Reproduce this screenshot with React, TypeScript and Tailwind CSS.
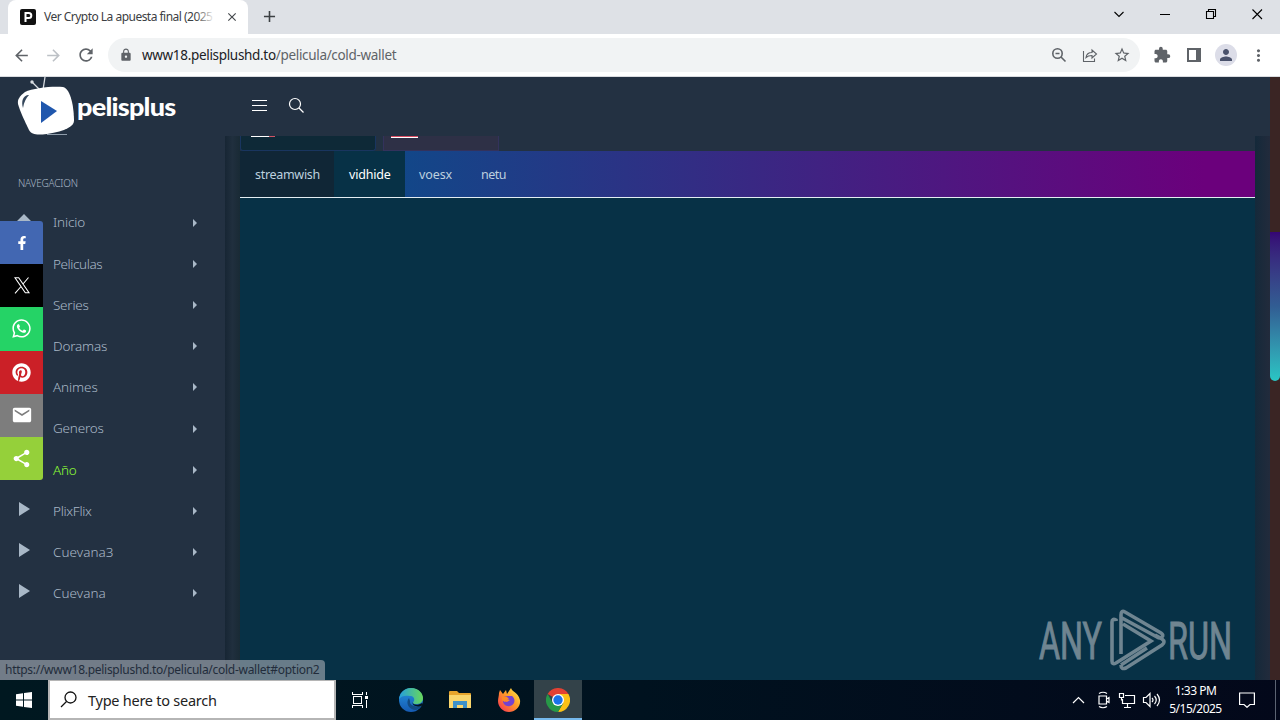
import { FaFacebookF, FaWhatsapp, FaPinterest } from 'react-icons/fa';
import { MdArrowBack, MdArrowForward, MdRefresh, MdLock, MdClose, MdAdd, MdExtension, MdPerson, MdEmail, MdShare, MdStarBorder, MdMoreVert } from 'react-icons/md';

const NAV_ITEMS = [
  { label: 'Inicio', tracking: 'tracking-[-0.15px]' },
  { label: 'Peliculas', tracking: 'tracking-[-0.4px]' },
  { label: 'Series', tracking: 'tracking-[-0.25px]' },
  { label: 'Doramas', tracking: 'tracking-[-0.2px]' },
  { label: 'Animes', tracking: 'tracking-[-0.1px]' },
  { label: 'Generos', tracking: 'tracking-[-0.2px]' },
  { label: 'Año', tracking: 'tracking-[-0.2px]', active: true },
  { label: 'PlixFlix', tracking: 'tracking-[-0.3px]', play: true },
  { label: 'Cuevana3', tracking: 'tracking-[0.05px]', play: true },
  { label: 'Cuevana', tracking: 'tracking-[0.05px]', play: true },
];

const SHARE_ITEMS = [
  { name: 'facebook', color: 'bg-[#4267b2]', icon: <FaFacebookF size={14} /> },
  { name: 'x', color: 'bg-black', icon: <XIcon /> },
  { name: 'whatsapp', color: 'bg-[#25d366]', icon: <FaWhatsapp size={21} /> },
  { name: 'pinterest', color: 'bg-[#cb2027]', icon: <FaPinterest size={19} /> },
  { name: 'email', color: 'bg-[#7d7d7d]', icon: <MdEmail size={22} /> },
  { name: 'share', color: 'bg-[#95d03a]', icon: <MdShare size={21} /> },
];

function XIcon() {
  return (
    <svg width="16" height="17" viewBox="0 0 16 17" fill="none" stroke="currentColor" strokeWidth="1.1">
      <path d="M1 .8h3.700l10.300 15h-3.700zM14.500.5L9 7M7 9.500L1 16.300" />
    </svg>
  );
}

function TabStrip() {
  return (
    <div className="flex h-[34px] shrink-0 items-end bg-[#dee1e6]">
      <div className="ml-2 flex h-[34px] w-[240px] items-center rounded-t-lg bg-white pl-3">
        <svg width="16" height="16" viewBox="0 0 16 16" className="shrink-0">
          <rect width="16" height="16" rx="2" fill="#111" />
          <path d="M5.500 13V4h3.300a2.500 2.500 0 0 1 0 5H5.500" fill="none" stroke="#fff" strokeWidth="2" />
        </svg>
        <span className="relative ml-2 w-[171px] text-[12px] leading-4 tracking-[-0.52px] whitespace-nowrap text-[#3c4043]">
          Ver Crypto La apuesta final (2025
          <span className="absolute inset-y-0 right-0 w-5 bg-gradient-to-r from-transparent to-white" />
        </span>
        <MdClose size={14} className="ml-[10px] text-[#45494d]" />
      </div>
      <MdAdd size={19} className="mb-2 ml-[12px] text-[#3c4043]" />
      <div className="mb-[11px] ml-auto flex items-center pr-[15px] text-black">
        <svg width="160" height="18" viewBox="0 0 160 18" fill="none" stroke="currentColor" strokeWidth="1.1">
          <path d="M9.500 7l4.500 4.500L18.500 7" />
          <path d="M55 9.500h10" shapeRendering="crispEdges" />
          <path d="M101.500 6.500h7v7h-7zM103.500 6.500v-2h7v7h-2" />
          <path d="M147.500 4.500l9.500 9.500M157 4.500l-9.500 9.500" />
        </svg>
      </div>
    </div>
  );
}

function Toolbar() {
  return (
    <div className="flex h-[43px] shrink-0 items-center border-b border-[#dadce0] bg-white text-[#5f6368]">
      <div className="flex w-[108px] items-center gap-[13px] pl-[12px]">
        <MdArrowBack size={19} />
        <MdArrowForward size={19} className="text-[#bdc1c6]" />
        <MdRefresh size={20} />
      </div>
      <div className="flex h-[34px] w-[1032px] items-center rounded-full bg-[#f1f3f4] pr-[9px] pl-[11px]">
        <MdLock size={14} />
        <span className="ml-[9px] text-[13.5px] tracking-[-0.32px] text-[#5f6368]">
          <span className="text-[#202124]">www18.pelisplushd.to</span>/pelicula/cold-wallet
        </span>
        <div className="ml-auto flex items-center gap-[15px]">
          <svg width="16" height="16" viewBox="0 0 16 16" fill="none" stroke="currentColor" strokeWidth="1.600">
            <circle cx="6.500" cy="6.500" r="4.700" />
            <path d="M10 10l4.500 4.500M4.500 6.500h4" />
          </svg>
          <svg width="16" height="16" viewBox="0 0 16 16" fill="none" stroke="currentColor" strokeWidth="1.100">
            <path d="M1.500 4v10.500h11v-3M4 10.500c.5-3.500 2.500-5 6-5V3l4.500 4-4.500 4V8.500c-2.500 0-4.500.5-6 2z" />
          </svg>
          <MdStarBorder size={18} />
        </div>
      </div>
      <MdExtension size={18} className="ml-[13px]" />
      <svg width="16" height="16" viewBox="0 0 16 16" className="ml-[15px]">
        <path d="M1 1h14v14H1zM3 3v10h7V3z" fill="currentColor" fillRule="evenodd" />
      </svg>
      <span className="ml-[13px] flex h-[22px] w-[22px] items-center justify-center rounded-full bg-[#dcdde8] text-[#49516b]">
        <MdPerson size={18} />
      </span>
      <MdMoreVert size={19} className="ml-[12px]" />
    </div>
  );
}

function Logo() {
  return (
    <div className="relative flex h-[59px] w-[225px] items-center">
      <svg width="80" height="60" viewBox="0 0 80 60" className="absolute top-0 left-0">
        <path d="M41 14L32 5M43 13l2-13" stroke="#d9dde2" strokeWidth="1.300" />
        <circle cx="32" cy="5" r="1.700" fill="#d9dde2" />
        <path d="M25 15c8-4 27-6 38-5 8 2 11 21 11 34 0 5-8 10-27 13-10 1-15 1-18-4-4-8-9-19-11-26-.8-5 2-8 7-12z" fill="#fff" />
        <path d="M28 18c-5 1-7 6-5 13 1-6 3-10 6-13z" fill="#33455a" />
        <path d="M41 24l16 10-16 12z" fill="#2057ad" />
        <path d="M47 57.500h20" stroke="#8f9dab" />
      </svg>
      <span className="relative -top-px ml-[77px] origin-left scale-x-[1.08] font-['Lato',sans-serif] text-[25px] leading-7 font-black tracking-[-0.7px] text-white">pelisplus</span>
    </div>
  );
}

function Header() {
  return (
    <header className="flex h-[59px] shrink-0 items-center bg-[#233142] text-white">
      <Logo />
      <svg width="15" height="12" viewBox="0 0 15 12" className="relative -top-[2px] ml-[27px]" shapeRendering="crispEdges">
        <path d="M0 1.500h15M0 6.500h15M0 11.500h15" stroke="currentColor" strokeWidth="1.200" />
      </svg>
      <svg width="17" height="17" viewBox="0 0 17 17" className="relative -top-px ml-[21px]" fill="none" stroke="currentColor" strokeWidth="1.200">
        <circle cx="7" cy="7" r="5.500" />
        <path d="M11 11l4.500 4.500" />
      </svg>
    </header>
  );
}

function Sidebar() {
  return (
    <aside className="w-[225px] shrink-0 bg-[#233142] text-[#a9b8c7]">
      <h2 className="mt-[40px] mb-[12px] ml-[18px] text-[10px] leading-[14px] font-light tracking-[-0.2px]">NAVEGACION</h2>
      <ul>
        {NAV_ITEMS.map((item) => (
          <li key={item.label} className="flex h-[41.200px] items-center pr-[27px] pl-[18px]">
            <span className="w-[35px]">
              {item.play && (
                <svg width="13" height="14" viewBox="0 0 13 14" className="relative -top-[2px]">
                  <path d="M1 0l11 7-11 7z" fill="currentColor" />
                </svg>
              )}
              {item.label === 'Inicio' && (
                <svg width="14" height="14" viewBox="0 0 14 14" className="relative -top-[2px] -left-px">
                  <path d="M7 0l7 7h-2v7H2V7H0z" fill="currentColor" />
                </svg>
              )}
            </span>
            <span className={`text-[13.5px] font-light ${item.tracking} ${item.active ? 'text-[#8dfc35]' : ''}`}>{item.label}</span>
            <svg width="6" height="8" viewBox="0 0 6 8" className="ml-auto">
              <path d="M1 0l4 4-4 4z" fill="currentColor" />
            </svg>
          </li>
        ))}
      </ul>
    </aside>
  );
}

function ShareBar() {
  return (
    <div className="absolute top-[144px] left-0 w-[43px] overflow-hidden rounded-r-[3px] text-white">
      {SHARE_ITEMS.map((item) => (
        <div key={item.name} className={`flex h-[43.200px] items-center justify-center ${item.color}`}>{item.icon}</div>
      ))}
    </div>
  );
}

function Player() {
  return (
    <main className="flex w-[1015px] shrink-0 flex-col bg-[#073146]">
      <div className="flex h-[15px] shrink-0 gap-[7px] bg-[#233142]">
        <div className="w-[136px] rounded-b-[3px] border border-t-0 border-[#19355f] bg-[#0e2937] pl-[10px]">
          <div className="flex h-px w-[24px] bg-white"><span className="ml-auto w-[6px] bg-[#d05465]" /></div>
        </div>
        <div className="w-[116px] border border-t-0 border-[#33325c] bg-[#2e3046] pl-[7px]">
          <div className="h-[2px] w-[27px] border-b border-white bg-[#d94b62]" />
        </div>
      </div>
      <nav className="flex h-[47px] shrink-0 border-b border-[#e3edf2] bg-[linear-gradient(to_right,#00558b,#6b007c_95%)] text-[12.5px] text-[#bdd0df]">
        <span className="flex w-[94px] items-center bg-[#102636] pt-[2px] pl-[15px] tracking-[-0.3px]">streamwish</span>
        <span className="flex w-[71px] items-center bg-[#073146] pt-[2px] pl-[15px] tracking-[-0.2px] text-white">vidhide</span>
        <span className="flex w-[62px] items-center pt-[2px] pl-[14px] tracking-[-0.1px]">voesx</span>
        <span className="flex items-center pt-[2px] pl-[14px] tracking-[-0.5px]">netu</span>
      </nav>
    </main>
  );
}

function Watermark() {
  return (
    <svg width="210" height="64" viewBox="0 0 210 64" className="absolute top-[531px] left-[1035px] overflow-visible opacity-60" fill="none" stroke="#b4bdc4" strokeWidth="3.600">
      <g fill="#b4bdc4" strokeWidth="1" fontSize="51" fontFamily="Roboto, sans-serif">
        <text x="4" y="51" textLength="63" lengthAdjust="spacingAndGlyphs">ANY</text>
        <text x="133" y="51" textLength="64" lengthAdjust="spacingAndGlyphs">RUN</text>
      </g>
      <path d="M81 13v-1q-4-2-4 2v39q0 4 4 2l35-22-28-17M86 46V7q0-5 4-3l36 21q3 2 1 4t-5 0L87 10M86 57q0 5 5 3l36-23q4-3 0-6l-7-4M86 57l26-17" />
    </svg>
  );
}

function Edge() {
  return (
    <svg width="24" height="24" viewBox="0 0 24 24">
      <defs>
        <linearGradient id="edgeTop"><stop stopColor="#249ede" /><stop offset="1" stopColor="#68d85b" /></linearGradient>
        <linearGradient id="edgeLow" x2="0" y2="1"><stop stopColor="#2593df" /><stop offset="1" stopColor="#155ab2" /></linearGradient>
      </defs>
      <circle cx="12" cy="12" r="12" fill="url(#edgeLow)" />
      <path d="M0 11C1 4 6 0 12 0c8 0 12 6 12 10 0 5-4 6-7 6-4 0-3-2-2-3 1-3-1-5-4-5-5-1-9 0-11 3z" fill="url(#edgeTop)" />
      <path d="M10 10c-4 5 0 12 7 12 3-1 5-3 6-5-5 3-13 1-12-4z" fill="#124b83" />
      <path d="M14 14c-1 3 5 4 9 1l1 2c-4 3-12 1-10-3z" fill="#04151f" />
    </svg>
  );
}

function Explorer() {
  return (
    <svg width="22" height="20" viewBox="0 0 22 20">
      <path d="M0 2q0-1 1-1h7l2 2h11q1 0 1 1v5H0z" fill="#e7a52c" />
      <path d="M0 5h22v13H0z" fill="#fad66c" />
      <path d="M4 18v-7h14v7h-4v-3H8v3z" fill="#3d91c9" />
    </svg>
  );
}

function Firefox() {
  return (
    <svg width="24" height="24" viewBox="0 0 24 24">
      <defs>
        <linearGradient id="fox" x1="1" x2="0" y2="1"><stop stopColor="#fff34e" /><stop offset=".45" stopColor="#ff9b27" /><stop offset="1" stopColor="#f72958" /></linearGradient>
      </defs>
      <path d="M2 5l1-3 3 4 3-4 1 4 4-6c1 4 7 4 9 12 1 7-5 12-11 12S1 19 1 13c0-3 1-5 1-8z" fill="url(#fox)" />
      <path d="M6 9l5-1 4 0c4 3 3 9-2 10-4 1-7-2-7-5l4 1 3-2-4-1z" fill="#7542d0" />
      <path d="M5 8l5 1 2 2-3 1-1 2-3-2z" fill="#ff8a24" />
    </svg>
  );
}

function Chrome() {
  return (
    <svg width="24" height="24" viewBox="0 0 24 24">
      <path d="M1.600 6A12 12 0 0 1 22.400 6L12 12z" fill="#e34133" />
      <path d="M22.400 6A12 12 0 0 1 12 24l5.200-9L12 6z" fill="#fbc116" />
      <path d="M1.600 6A12 12 0 0 0 12 24l5.200-9-10.400 0z" fill="#279847" />
      <path d="M12 6h10.400L17.200 15z" fill="#fbc116" />
      <circle cx="12" cy="12" r="6" fill="#fff" />
      <circle cx="12" cy="12" r="4.700" fill="#1a73e8" />
    </svg>
  );
}

function Taskbar() {
  return (
    <footer className="flex h-10 shrink-0 bg-linear-to-r from-[#001820] via-[#00121f] to-[#03081a] text-white">
      <div className="flex w-12 items-center justify-center">
        <svg width="16" height="16" viewBox="0 0 16 16" fill="#fff"><path d="M0 2.300l7-1v6.200H0zM8 1.100L16 0v7.500H8zM0 8.500h7v6.200l-7-1zM8 8.500h8V16l-8-1.100z" /></svg>
      </div>
      <div className="flex w-[288px] items-center border-2 border-t-1 border-[#b5b5b5] bg-white pl-[10px] text-[#222]">
        <svg width="17" height="17" viewBox="0 0 17 17" fill="none" stroke="#111" strokeWidth="1.300"><circle cx="10.500" cy="6.500" r="5.500" /><path d="M6.500 10.500L1 16" /></svg>
        <span className="relative top-px ml-[11px] text-[14.5px] tracking-[-0.25px]">Type here to search</span>
      </div>
      <div className="flex w-12 items-center justify-center">
        <svg width="16" height="16" viewBox="0 0 16 16" fill="none" stroke="#fff" strokeWidth="1.200" shapeRendering="crispEdges">
          <path d="M.5 0v2.500h10V0M1.500 4.500h8v7h-8zM.5 16v-2.500h10V16M14.500 0v3M14.500 8v8" /><path d="M13 4h3v3h-3z" fill="#fff" stroke="none" />
        </svg>
      </div>
      <div className="ml-[3px] flex w-12 items-center justify-center"><Edge /></div>
      <div className="flex w-[50px] items-center justify-center"><Explorer /></div>
      <div className="flex w-[49px] items-center justify-center pr-[2px]"><Firefox /></div>
      <div className="flex w-12 items-center justify-center border-b-2 border-[#76b9ed] bg-[#334249] pt-[2px]"><Chrome /></div>
      <div className="ml-auto flex items-center">
        <svg width="92" height="20" viewBox="0 0 92 20" fill="none" stroke="#fff" strokeWidth="1.200">
          <path d="M2 13l5.500-5.500L13 13" />
          <path d="M28 6h7.500v8H28zM35.500 9l2.500-1.500v5L35.500 11M28 3.500q4-2.500 8 0M28 16.500q4 2.500 8 0" />
          <path d="M54 5.500h9.500v8h-12V9M53 17.500h7M56.500 13.500v4M48.500 3.500h4v4h-4zM50.500 7.500v3" />
          <path d="M72.500 7.500h2.500l4-4v13l-4-4h-2.500zM81 8q2 2 0 4M83.500 6q3.500 4 0 8M86 4q5 6 0 12" />
        </svg>
        <div className="ml-[6px] w-[53px] text-center text-[12px] leading-[18px] tracking-[-0.5px]">
          <div>1:33 PM</div>
          <div>5/15/2025</div>
        </div>
        <svg width="16" height="16" viewBox="0 0 16 16" fill="none" stroke="#fff" strokeWidth="1.200" className="ml-[17px]"><path d="M.6 1h14.800v11.500H11L8 15.300 5 12.500H.6z" /></svg>
        <span className="ml-[20px] h-10 w-[5px] border-l border-[#5c6472]" />
      </div>
    </footer>
  );
}

export default function App() {
  return (
    <div className="flex h-[720px] w-[1280px] flex-col overflow-hidden bg-white font-['Noto_Sans',sans-serif]">
      <TabStrip />
      <Toolbar />
      <div className="relative flex h-[603px] shrink-0">
        <div className="flex w-[1270px] flex-col">
          <Header />
          <div className="flex flex-1">
            <Sidebar />
            <div className="w-[15px] shrink-0 bg-linear-to-r from-[#172634] via-[#202f3e] to-[#192a35]" />
            <Player />
            <div className="w-[15px] shrink-0 bg-linear-to-r from-[#14293a] to-[#222b3c]" />
          </div>
        </div>
        <div className="w-[10px] bg-[#3a2524] pt-[155px]">
          <div className="h-[149px] rounded-b-full bg-linear-to-b from-[#350574] via-[#315d93] to-[#29c6c4]" />
        </div>
        <ShareBar />
        <Watermark />
        <div className="absolute bottom-0 left-0 flex h-5 w-[325px] items-center rounded-tr-[4px] bg-[#9ca5ae]/65 pl-[5px] text-[12px] tracking-[-0.28px] whitespace-nowrap text-[#222c3b]">
          https://www18.pelisplushd.to/pelicula/cold-wallet#option2
        </div>
      </div>
      <Taskbar />
    </div>
  );
}
